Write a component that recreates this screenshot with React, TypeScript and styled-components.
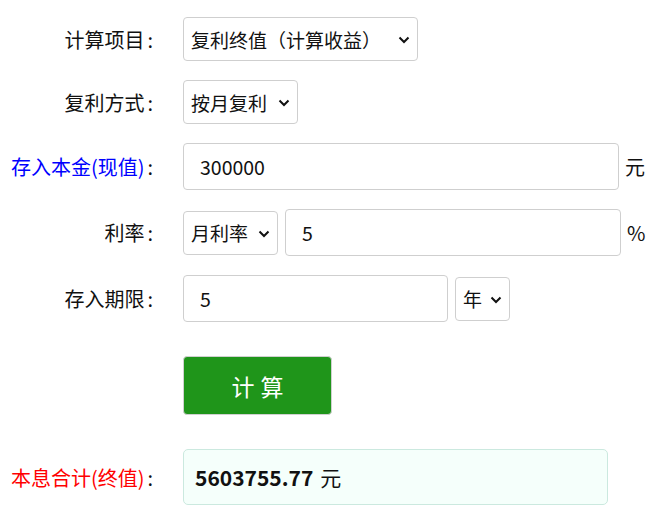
import React from 'react';
import styled, { createGlobalStyle } from 'styled-components';

const GlobalStyle = createGlobalStyle`
  body {
    margin: 0;
    background: #fff;
    font-family: "Noto Sans CJK SC", "Noto Sans", sans-serif;
    color: #111;
  }
`;

const Form = styled.div`
  display: flex;
  flex-direction: column;
  gap: 19px;
  padding-top: 17px;
`;

const Row = styled.div<{ $top?: number }>`
  display: flex;
  align-items: center;
  margin-top: ${(props) => props.$top || 0}px;
`;

const Label = styled.div<{ $color?: string }>`
  width: 153px;
  flex: none;
  margin-right: 30px;
  text-align: right;
  font-size: 20px;
  color: ${(props) => props.$color || '#111'};
  white-space: nowrap;
`;

const Colon = styled.span`
  color: #111;
  margin-left: 3px;
`;

const Controls = styled.div`
  display: flex;
  align-items: center;
  gap: 7px;
`;

const SelectWrap = styled.div<{ $w: number }>`
  position: relative;
  width: ${(props) => props.$w}px;
  height: 44px;
`;

const Select = styled.select`
  appearance: none;
  width: 100%;
  height: 100%;
  box-sizing: border-box;
  border: 1px solid #cfcfcf;
  border-radius: 4px;
  background: #fff;
  font-family: inherit;
  font-size: 19px;
  color: #111;
  padding: 0 24px 0 7px;
  outline: none;
`;

const Chevron = styled.svg`
  position: absolute;
  right: 8px;
  top: 50%;
  width: 12px;
  height: 8px;
  margin-top: -3px;
  pointer-events: none;
`;

const Input = styled.input<{ $w: number }>`
  width: ${(props) => props.$w}px;
  height: 47px;
  box-sizing: border-box;
  border: 1px solid #cfcfcf;
  border-radius: 4px;
  padding: 0 16px;
  font-family: inherit;
  font-size: 19.5px;
  color: #111;
  outline: none;
`;

const Unit = styled.span`
  font-size: 20px;
  margin-left: -1px;
`;

const Button = styled.button`
  width: 149px;
  height: 59px;
  background: #1f951a;
  border: 1px solid #d0d0d0;
  border-radius: 4px;
  color: #fff;
  font-family: inherit;
  font-size: 23px;
  letter-spacing: 6px;
  text-indent: 6px;
  cursor: pointer;
`;

const Result = styled.div`
  width: 425px;
  height: 56px;
  box-sizing: border-box;
  background: #f5fffb;
  border: 1px solid #cbe9df;
  border-radius: 5px;
  display: flex;
  align-items: center;
  padding-left: 11px;
  font-size: 21px;
`;

const Amount = styled.b`
  font-weight: 700;
  margin-right: 7px;
`;

const Dropdown: React.FC<{ w: number; options: string[] }> = ({ w, options }) => (
  <SelectWrap $w={w}>
    <Select defaultValue={options[0]}>
      {options.map((o) => (
        <option key={o}>{o}</option>
      ))}
    </Select>
    <Chevron viewBox="0 0 12 8">
      <path d="M1.5 1.5 L6 6 L10.5 1.5" fill="none" stroke="#111" strokeWidth="2" />
    </Chevron>
  </SelectWrap>
);

export default function App() {
  return (
    <>
      <GlobalStyle />
      <Form>
        <Row>
          <Label>
            计算项目<Colon>:</Colon>
          </Label>
          <Dropdown w={235} options={['复利终值（计算收益）', '复利现值（计算本金）']} />
        </Row>
        <Row>
          <Label>
            复利方式<Colon>:</Colon>
          </Label>
          <Dropdown w={115} options={['按月复利', '按年复利', '按日复利']} />
        </Row>
        <Row>
          <Label $color="#0000ff">
            存入本金(现值)<Colon>:</Colon>
          </Label>
          <Controls>
            <Input $w={436} defaultValue="300000" />
            <Unit>元</Unit>
          </Controls>
        </Row>
        <Row>
          <Label>
            利率<Colon>:</Colon>
          </Label>
          <Controls>
            <Dropdown w={95} options={['月利率', '年利率', '日利率']} />
            <Input $w={336} defaultValue="5" />
            <Unit>%</Unit>
          </Controls>
        </Row>
        <Row>
          <Label>
            存入期限<Colon>:</Colon>
          </Label>
          <Controls>
            <Input $w={265} defaultValue="5" />
            <Dropdown w={55} options={['年', '月', '日']} />
          </Controls>
        </Row>
        <Row $top={15}>
          <Label />
          <Button>计算</Button>
        </Row>
        <Row $top={15}>
          <Label $color="#ff0000">
            本息合计(终值)<Colon>:</Colon>
          </Label>
          <Result>
            <Amount>5603755.77</Amount>元
          </Result>
        </Row>
      </Form>
    </>
  );
}
